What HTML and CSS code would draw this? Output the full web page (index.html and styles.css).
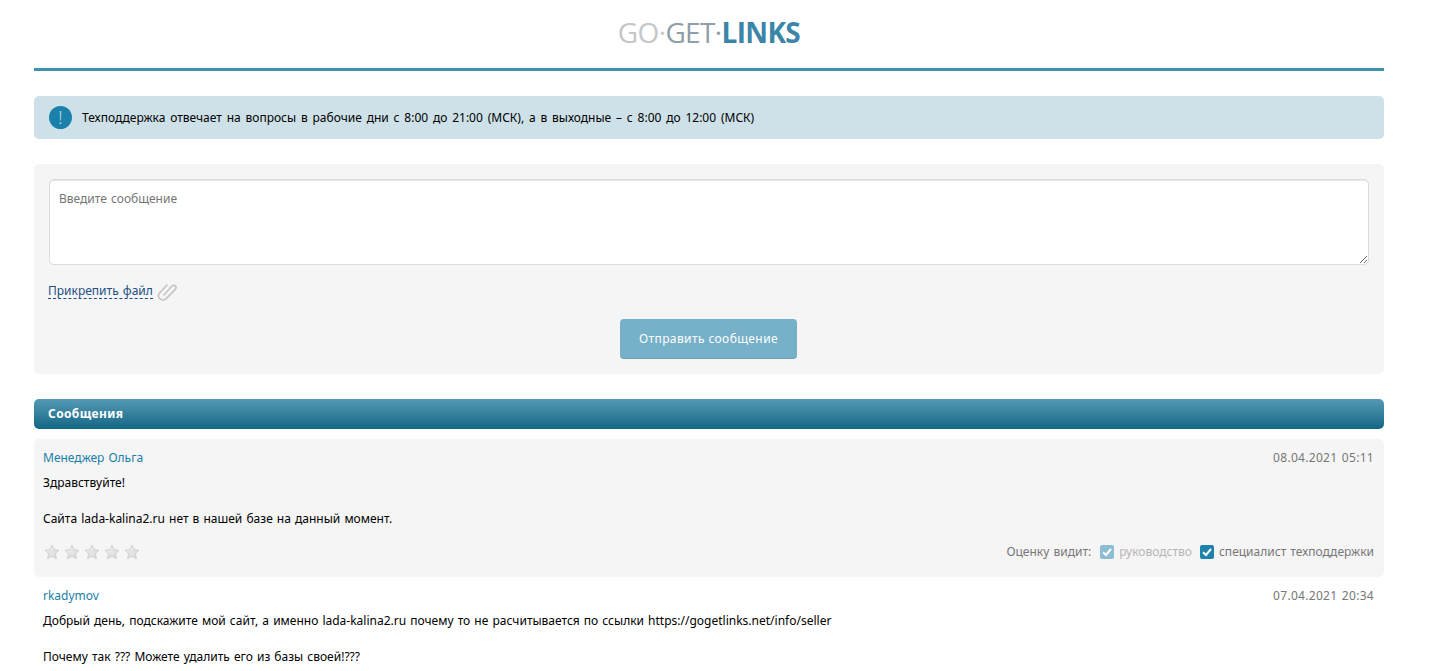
FILE: index.html
```html
<!DOCTYPE html>
<html>
<head>
  <title>GoGetLinks</title>
  <link rel="stylesheet" href="styles.css">
</head>
<body>
  <div class="page">
    <div class="header">
      <div class="logo"><span class="logo-go">GO·</span><span class="logo-get">GET·</span><span class="logo-links">LINKS</span></div>
    </div>

    <div class="notice">
      <span class="notice-icon">!</span>
      <span class="notice-text">Техподдержка отвечает на вопросы в рабочие дни с 8:00 до 21:00 (МСК), а в выходные – с 8:00 до 12:00 (МСК)</span>
    </div>

    <div class="form-box">
      <textarea class="message-input" placeholder="Введите сообщение"></textarea>
      <div class="attach-row">
        <a class="attach-link">Прикрепить файл</a>
        <svg class="clip" width="20" height="18" viewBox="0 0 20 18">
          <path d="M6.5 12.5 L14.5 3.5 C15.8 2 17.6 2.2 18.4 3 C19.3 3.9 19.2 5.4 18 6.6 L9.5 15.4 C7.8 17.1 5 17.2 3 15.8 C1 14.4 0.9 11.8 2.6 10 L10.5 1.5" fill="none" stroke="#c4c4c4" stroke-width="1.6"/>
        </svg>
      </div>
      <div class="submit-row">
        <button class="submit-btn">Отправить сообщение</button>
      </div>
    </div>

    <div class="section-bar">Сообщения</div>

    <div class="message message-shaded">
      <div class="message-head">
        <a class="author">Менеджер Ольга</a>
        <span class="date">08.04.2021 05:11</span>
      </div>
      <p>Здравствуйте!</p>
      <p>Сайта lada-kalina2.ru нет в нашей базе на данный момент.</p>
      <div class="message-foot">
        <div class="stars">
          <svg class="star" viewBox="0 0 20 20">
            <defs>
              <linearGradient id="star-fill" x1="0" y1="0" x2="1" y2="1">
                <stop offset="0" stop-color="#f2f2f0"/>
                <stop offset="1" stop-color="#d8d8d6"/>
              </linearGradient>
            </defs>
            <polygon fill="url(#star-fill)" points="10,1.5 12.6,7.2 18.8,7.9 14.2,12.1 15.5,18.3 10,15.2 4.5,18.3 5.8,12.1 1.2,7.9 7.4,7.2"/>
          </svg>
          <svg class="star" viewBox="0 0 20 20"><polygon fill="url(#star-fill)" points="10,1.5 12.6,7.2 18.8,7.9 14.2,12.1 15.5,18.3 10,15.2 4.5,18.3 5.8,12.1 1.2,7.9 7.4,7.2"/></svg>
          <svg class="star" viewBox="0 0 20 20"><polygon fill="url(#star-fill)" points="10,1.5 12.6,7.2 18.8,7.9 14.2,12.1 15.5,18.3 10,15.2 4.5,18.3 5.8,12.1 1.2,7.9 7.4,7.2"/></svg>
          <svg class="star" viewBox="0 0 20 20"><polygon fill="url(#star-fill)" points="10,1.5 12.6,7.2 18.8,7.9 14.2,12.1 15.5,18.3 10,15.2 4.5,18.3 5.8,12.1 1.2,7.9 7.4,7.2"/></svg>
          <svg class="star" viewBox="0 0 20 20"><polygon fill="url(#star-fill)" points="10,1.5 12.6,7.2 18.8,7.9 14.2,12.1 15.5,18.3 10,15.2 4.5,18.3 5.8,12.1 1.2,7.9 7.4,7.2"/></svg>
        </div>
        <div class="visibility">
          <span class="visibility-label">Оценку видит:</span>
          <span class="check check-off"><svg viewBox="0 0 14 14"><path d="M3 7.2 L6 10 L11 4" fill="none" stroke="#fff" stroke-width="2"/></svg></span>
          <span class="muted">руководство</span>
          <span class="check"><svg viewBox="0 0 14 14"><path d="M3 7.2 L6 10 L11 4" fill="none" stroke="#fff" stroke-width="2"/></svg></span>
          <span>специалист техподдержки</span>
        </div>
      </div>
    </div>

    <div class="message">
      <div class="message-head">
        <a class="author">rkadymov</a>
        <span class="date">07.04.2021 20:34</span>
      </div>
      <p>Добрый день, подскажите мой сайт, а именно lada-kalina2.ru почему то не расчитывается по ссылки https://gogetlinks.net/info/seller</p>
      <p>Почему так ??? Можете удалить его из базы своей!???</p>
    </div>
  </div>
</body>
</html>
```

FILE: styles.css
```css
html, body {
  height: 671px;
  overflow: hidden;
}
body {
  margin: 0;
  background: #fff;
  color: #000;
  font-family: "Noto Sans", sans-serif;
  font-size: 12px;
  word-spacing: 1px;
}
.page {
  width: 1350px;
  margin-left: 34px;
}
.header {
  height: 68px;
  border-bottom: 3px solid #3f91af;
  display: flex;
  justify-content: center;
}
.logo {
  margin-top: 15px;
  font-family: "Open Sans", sans-serif;
  font-size: 28px;
  line-height: 34px;
  letter-spacing: -0.65px;
}
.logo-go {
  color: #c4c6c8;
}
.logo-get {
  color: #8f9ea7;
}
.logo-links {
  color: #3b86a8;
  font-weight: 700;
}
.notice {
  margin-top: 25px;
  height: 43px;
  padding-left: 15px;
  display: flex;
  align-items: center;
  gap: 10px;
  background: #cee1e8;
  border-radius: 5px;
}
.notice-icon {
  width: 23px;
  height: 23px;
  border-radius: 50%;
  background: #1c81aa;
  color: #cee1e8;
  text-align: center;
  line-height: 23px;
  font-family: "Open Sans", sans-serif;
  font-weight: 300;
  font-size: 18px;
}
.notice-text {
  word-spacing: 1.7px;
}
.form-box {
  margin-top: 25px;
  height: 210px;
  box-sizing: border-box;
  padding: 15px;
  background: #f5f5f5;
  border-radius: 5px;
}
.message-input {
  display: block;
  width: 100%;
  height: 86px;
  box-sizing: border-box;
  padding: 10px 9px;
  border: 1px solid #dcdcdc;
  border-radius: 5px;
  box-shadow: inset 0 1px 1px #e4e4e4;
  background: #fff;
  font-family: "Noto Sans", sans-serif;
  font-size: 12px;
  word-spacing: 1px;
  outline: none;
}
.message-input::placeholder {
  color: #757575;
}
.attach-row {
  margin-top: 16px;
  height: 22px;
  margin-left: -1px;
  display: flex;
  align-items: center;
  gap: 4px;
}
.attach-link {
  color: #1d4f85;
  border-bottom: 1px dashed #1d4f85;
  line-height: 14px;
  margin-bottom: 2px;
}
.submit-row {
  margin-top: 16px;
  display: flex;
  justify-content: center;
}
.submit-btn {
  width: 177px;
  height: 40px;
  margin-right: 1px;
  border: none;
  border-bottom: 1px solid #6fa0b6;
  border-radius: 4px;
  background: #76b0c9;
  color: #fff;
  font-family: "Noto Sans", sans-serif;
  font-size: 12px;
  letter-spacing: 0.4px;
}
.section-bar {
  margin-top: 25px;
  height: 30px;
  padding-left: 14px;
  line-height: 29px;
  border-radius: 5px;
  background: linear-gradient(#559ab5, #136684);
  color: #fff;
  font-weight: bold;
  letter-spacing: 0.4px;
}
.message {
  margin-top: 10px;
  padding: 11px 10px 0 9px;
}
.message-shaded {
  height: 138px;
  box-sizing: border-box;
  background: #f5f5f5;
  border-radius: 5px;
}
.message-shaded + .message {
  margin-top: 0;
}
.message p {
  margin: 0 0 18px;
  line-height: 18px;
}
.message-head {
  display: flex;
  justify-content: space-between;
  line-height: 16px;
  margin-bottom: 8px;
}
.author {
  color: #1a7fa8;
}
.date {
  color: #777;
  letter-spacing: 0.3px;
}
.message-foot {
  margin-top: -3px;
  display: flex;
  justify-content: space-between;
  align-items: center;
}
.stars {
  display: flex;
  margin-left: 1px;
  gap: 4px;
}
.star {
  width: 16px;
  height: 16px;
  stroke: #c9c9c7;
}
.visibility {
  display: flex;
  align-items: center;
  gap: 5px;
  color: #777;
}
.visibility-label {
  margin-right: 4px;
}
.muted {
  color: #b5b5b5;
  margin-right: 3px;
}
.check {
  width: 14px;
  height: 14px;
  border-radius: 2px;
  background: #1f82aa;
  display: flex;
}
.check-off {
  background: #8dbdd2;
}
```
